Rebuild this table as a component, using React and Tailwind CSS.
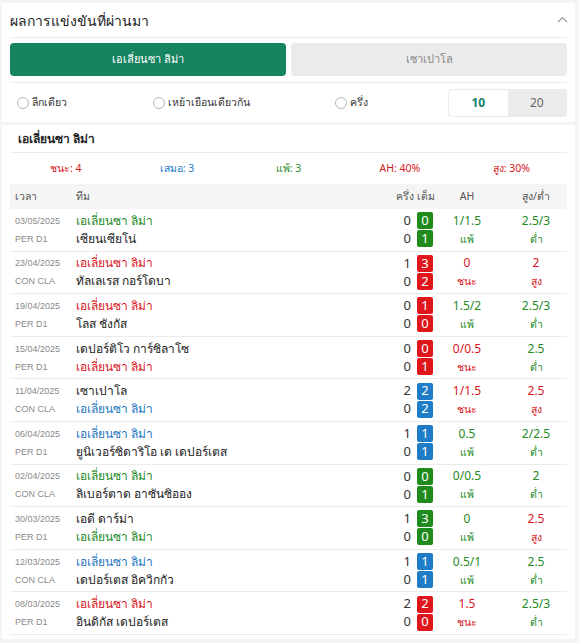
import React from 'react';

const ALIANZA = 'เอเลี่ยนซา ลิม่า';

// res: w = ชนะ (red), d = เสมอ (blue), l = แพ้ (green)
const matches = [
  { date: '03/05/2025', league: 'PER D1', home: ALIANZA, away: 'เซียนเซียโน่', us: 'home', res: 'l', ht: [0, 0], ft: [0, 1], ah: '1/1.5', ahRes: 'แพ้', ahC: 'l', ou: '2.5/3', ouRes: 'ต่ำ', ouC: 'l' },
  { date: '23/04/2025', league: 'CON CLA', home: ALIANZA, away: 'ทัลเลเรส กอร์โดบา', us: 'home', res: 'w', ht: [1, 0], ft: [3, 2], ah: '0', ahRes: 'ชนะ', ahC: 'w', ou: '2', ouRes: 'สูง', ouC: 'w' },
  { date: '19/04/2025', league: 'PER D1', home: ALIANZA, away: 'โลส ชังกัส', us: 'home', res: 'w', ht: [0, 0], ft: [1, 0], ah: '1.5/2', ahRes: 'แพ้', ahC: 'l', ou: '2.5/3', ouRes: 'ต่ำ', ouC: 'l' },
  { date: '15/04/2025', league: 'PER D1', home: 'เดปอร์ติโว การ์ซิลาโซ', away: ALIANZA, us: 'away', res: 'w', ht: [0, 0], ft: [0, 1], ah: '0/0.5', ahRes: 'ชนะ', ahC: 'w', ou: '2.5', ouRes: 'ต่ำ', ouC: 'l' },
  { date: '11/04/2025', league: 'CON CLA', home: 'เซาเปาโล', away: ALIANZA, us: 'away', res: 'd', ht: [2, 0], ft: [2, 2], ah: '1/1.5', ahRes: 'ชนะ', ahC: 'w', ou: '2.5', ouRes: 'สูง', ouC: 'w' },
  { date: '06/04/2025', league: 'PER D1', home: ALIANZA, away: 'ยูนิเวอร์ซิดาริโอ เด เดปอร์เตส', us: 'home', res: 'd', ht: [1, 0], ft: [1, 1], ah: '0.5', ahRes: 'แพ้', ahC: 'l', ou: '2/2.5', ouRes: 'ต่ำ', ouC: 'l' },
  { date: '02/04/2025', league: 'CON CLA', home: ALIANZA, away: 'ลิเบอร์ตาด อาซันซิออง', us: 'home', res: 'l', ht: [0, 0], ft: [0, 1], ah: '0/0.5', ahRes: 'แพ้', ahC: 'l', ou: '2', ouRes: 'ต่ำ', ouC: 'l' },
  { date: '30/03/2025', league: 'PER D1', home: 'เอดี ดาร์ม่า', away: ALIANZA, us: 'away', res: 'l', ht: [1, 0], ft: [3, 0], ah: '0', ahRes: 'แพ้', ahC: 'l', ou: '2.5', ouRes: 'สูง', ouC: 'w' },
  { date: '12/03/2025', league: 'CON CLA', home: ALIANZA, away: 'เดปอร์เตส อิควิกกัว', us: 'home', res: 'd', ht: [1, 0], ft: [1, 1], ah: '0.5/1', ahRes: 'แพ้', ahC: 'l', ou: '2.5', ouRes: 'ต่ำ', ouC: 'l' },
  { date: '08/03/2025', league: 'PER D1', home: ALIANZA, away: 'อินดิกัส เดปอร์เตส', us: 'home', res: 'w', ht: [2, 0], ft: [2, 0], ah: '1.5', ahRes: 'ชนะ', ahC: 'w', ou: '2.5/3', ouRes: 'ต่ำ', ouC: 'l' },
];

const textColor = { w: 'text-[#d9141c]', d: 'text-[#1d75bf]', l: 'text-[#24891f]' };
const boxColor = { w: 'bg-[#e0161d]', d: 'bg-[#1f7cc7]', l: 'bg-[#1f8b1d]' };

const Radio = ({ label, className }) => (
  <label className={`flex items-center gap-[3px] text-[10.5px] text-[#333] ${className}`}>
    <span className="w-[12px] h-[12px] rounded-full border border-[#b5b5b5] bg-white" />
    {label}
  </label>
);

const MatchRow = ({ m }) => (
  <div className="flex h-[42.6px] items-center border-b border-[#ececec]">
    <div className="w-[66px] pl-[5px] flex flex-col text-[9px] leading-[18px] text-[#8a8a8a] font-['Liberation_Sans',sans-serif]">
      <span>{m.date}</span>
      <span>{m.league}</span>
    </div>
    <div className="flex-1 flex flex-col text-[12px] leading-[18px] text-[#222]">
      <span className={m.us === 'home' ? textColor[m.res] : ''}>{m.home}</span>
      <span className={m.us === 'away' ? textColor[m.res] : ''}>{m.away}</span>
    </div>
    <div className="w-[60px] flex flex-col items-end pr-[4px]">
      {[0, 1].map((i) => (
        <div key={i} className="flex items-center h-[18px]">
          <span className="text-[13px] text-[#333] mr-[6px]">{m.ht[i]}</span>
          <span className={`w-[16px] h-[17px] rounded-[2px] text-white text-[13px] flex items-center justify-center ${boxColor[m.res]}`}>
            {m.ft[i]}
          </span>
        </div>
      ))}
    </div>
    <div className={`w-[60px] flex flex-col items-center leading-[18px] ${textColor[m.ahC]}`}>
      <span className="text-[12px]">{m.ah}</span>
      <span className="text-[10.5px]">{m.ahRes}</span>
    </div>
    <div className={`w-[70px] pl-[8px] flex flex-col items-center leading-[18px] ${textColor[m.ouC]}`}>
      <span className="text-[12px]">{m.ou}</span>
      <span className="text-[10.5px]">{m.ouRes}</span>
    </div>
  </div>
);

export default function App() {
  return (
    <div
      className="min-h-screen bg-[#f4f4f4] pt-[3px] pl-[2px] pr-[4px] pb-[3px]"
      style={{ fontFamily: '"Noto Sans", "Liberation Sans", sans-serif' }}
    >
      {/* filters card */}
      <div className="bg-white px-[8px]">
        <div className="flex items-center justify-between h-[35px] border-b border-[#ececec]">
          <h2 className="text-[14px] text-[#222] font-medium">ผลการแข่งขันที่ผ่านมา</h2>
          <svg width="11" height="7" viewBox="0 0 11 7" className="-mr-[1px] mb-[2px]">
            <path d="M1 6 L5.5 1.5 L10 6" fill="none" stroke="#9a9a9a" strokeWidth="1.2" />
          </svg>
        </div>
        <div className="flex gap-[5px] pt-[5px] pb-[6px] border-b border-[#ececec]">
          <button className="flex-1 h-[33px] rounded-[4px] bg-[#178461] text-white text-[11px] font-medium">
            {ALIANZA}
          </button>
          <button className="flex-1 h-[33px] rounded-[4px] bg-[#ebebeb] text-[#888] text-[11px]">
            เซาเปาโล
          </button>
        </div>
        <div className="flex items-center h-[39px] pl-[7px]">
          <Radio label="ลีกเดียว" className="w-[136px]" />
          <Radio label="เหย้าเยือนเดียวกัน" className="w-[182px]" />
          <Radio label="ครึ่ง" className="" />
          <div className="ml-auto flex h-[28px] w-[119px] rounded-[4px] bg-[#ececec] p-px text-[12px]">
            <span className="flex-1 flex items-center justify-center rounded-l-[4px] bg-white font-bold text-[#12806a]">10</span>
            <span className="flex-1 flex items-center justify-center text-[#666]">20</span>
          </div>
        </div>
      </div>

      {/* results card */}
      <div className="bg-white px-[8px] mt-[3px] pb-[4px]">
        <div className="flex items-center h-[28px] pl-[8px] border-b border-[#ececec] text-[12px] font-bold text-[#222]">
          {ALIANZA}
        </div>
        <div className="grid grid-cols-5 h-[31px] items-center text-center text-[10.5px]">
          <span className="text-[#d41a1a]">ชนะ: 4</span>
          <span className="text-[#1d7ac4]">เสมอ: 3</span>
          <span className="text-[#2a8c2a]">แพ้: 3</span>
          <span className="text-[#d41a1a]">AH: 40%</span>
          <span className="text-[#d41a1a]">สูง: 30%</span>
        </div>
        <div className="flex items-center h-[25px] bg-[#f5f5f5] text-[10.5px] text-[#555]">
          <span className="w-[66px] pl-[5px]">เวลา</span>
          <span className="flex-1">ทีม</span>
          <span className="w-[60px] text-right pr-[2px]">ครึ่ง เต็ม</span>
          <span className="w-[60px] text-center">AH</span>
          <span className="w-[70px] pl-[8px] text-center">สูง/ต่ำ</span>
        </div>
        {matches.map((m, i) => (
          <MatchRow key={i} m={m} />
        ))}
      </div>
    </div>
  );
}
